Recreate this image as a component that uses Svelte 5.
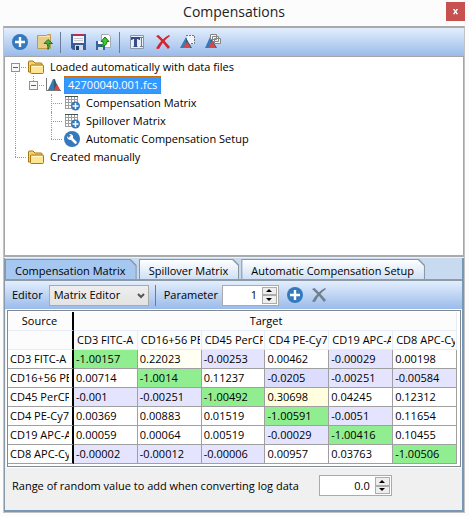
<!-- Compensations.svelte -->
<script lang="ts">
  interface Row {
    source: string;
    values: string[];
  }

  const targets: string[] = ['CD3 FITC-A', 'CD16+56 PE-A', 'CD45 PerCP-A', 'CD4 PE-Cy7-A', 'CD19 APC-A', 'CD8 APC-Cy7-A'];
  const tabs: string[] = ['Compensation Matrix', 'Spillover Matrix', 'Automatic Compensation Setup'];

  const rows: Row[] = [
    { source: 'CD3 FITC-A', values: ['-1.00157', '0.22023', '-0.00253', '0.00462', '-0.00029', '0.00198'] },
    { source: 'CD16+56 PE-A', values: ['0.00714', '-1.0014', '0.11237', '-0.0205', '-0.00251', '-0.00584'] },
    { source: 'CD45 PerCP-A', values: ['-0.001', '-0.00251', '-1.00492', '0.30698', '0.04245', '0.12312'] },
    { source: 'CD4 PE-Cy7-A', values: ['0.00369', '0.00883', '0.01519', '-1.00591', '-0.0051', '0.11654'] },
    { source: 'CD19 APC-A', values: ['0.00059', '0.00064', '0.00519', '-0.00029', '-1.00416', '0.10455'] },
    { source: 'CD8 APC-Cy7-A', values: ['-0.00002', '-0.00012', '-0.00006', '0.00957', '0.03763', '-1.00506'] }
  ];

  let activeTab = 0;
  let parameter = '1';
  let range = '0.0';

  // background class of a cell, by its value
  const shade = (text: string): string => {
    const v = parseFloat(text);
    if (v <= -1) return 'diagonal';
    if (v < -0.02) return 'low';
    if (v < 0) return 'negative';
    if (v > 0.3) return 'high';
    if (v > 0.2) return 'warm';
    return '';
  };

  const stepParameter = (by: number): void => {
    parameter = String(Math.max(1, Number(parameter) + by));
  };

  const stepRange = (by: number): void => {
    range = Math.max(0, Number(range) + by / 10).toFixed(1);
  };
</script>

{#snippet plusIcon()}
  <svg class="icon" viewBox="0 0 16 16">
    <circle cx="8" cy="8" r="8" fill="#3579bd" />
    <path d="M8 3v10M3 8h10" stroke="#fff" stroke-width="2.4" />
  </svg>
{/snippet}

{#snippet crossIcon(color)}
  <svg class="icon" viewBox="0 0 16 16">
    <path d="M1 2 3.500 1Q9 6 15 13L13 15Q8 8 1 2Z" fill={color} />
    <path d="M14 1 15 2Q8 7 4 15L1 14.500Q6 5 14 1Z" fill={color} />
  </svg>
{/snippet}

{#snippet folderIcon()}
  <svg class="icon" viewBox="0 0 16 16">
    <path d="M.500 13V3q0-1 1-1H5l2 2h6q1 0 1 1v8z" fill="#f4d16a" stroke="#a87812" />
    <path d="M2.500 7q0-1 1-1h11q1 0 1 1v6.500q0 1-1 1h-11q-1 0-1-1z" fill="#ffe591" stroke="#a87812" />
    <path d="M4 7.500h10" stroke="#fff7cd" />
  </svg>
{/snippet}

{#snippet gridIcon()}
  <svg class="icon" viewBox="0 0 16 16">
    <path d="M1 1h13v13H1z" fill="#fff" />
    <path d="M1.500 1v13M4.500 1v13M7.500 1v13M10.500 1v13M13.500 1v13M1 4.500h13M1 7.500h13M1 10.500h13M1 13.500h13" stroke="#9d9d9d" />
    <path d="M1 1h13v1H1z" fill="#3f5550" />
    <circle cx="11.500" cy="11" r="4.500" fill="#3579bd" />
    <path d="M11.500 8v6M8.500 11h6" stroke="#fff" stroke-width="1.500" />
  </svg>
{/snippet}

<div class="window">
  <header>
    <h1>Compensations</h1>
    <button class="close" aria-label="Close">
      <svg viewBox="0 0 8 8"><path d="M1 1h2l1 2 1-2h2L5 4l2 3H5L4 5 3 7H1l2-3z" fill="#fff" /></svg>
    </button>
  </header>

  <div class="frame">
    <div class="toolbar">
      <button aria-label="Add">{@render plusIcon()}</button>
      <button aria-label="Open">
        <svg class="icon" viewBox="0 0 16 16">
          <path d="M.500 1.500h9l1-1h3v14H.500z" fill="#e8cd88" stroke="#bd9b4d" />
          <path d="M2 2h11v1H2z" fill="#f7e5ac" />
          <path d="M7 9.500 11 5.500l4.500 4H12q1 4-1 6 0-3-1-6z" fill="#4dae42" stroke="#24752a" />
        </svg>
      </button>
      <span class="separator"></span>
      <button aria-label="Save">
        <svg class="icon" viewBox="0 0 16 16">
          <path d="M0 0h15v16H2l-2-2z" fill="#385d9a" />
          <path d="M2 0h11v9H2z" fill="#f6f6f8" />
          <path d="M2 0h11v2H2z" fill="#b92d52" />
          <path d="M3 4.500h9M3 6.500h9" stroke="#c8c8d0" />
          <path d="M4 11h8v5H4z" fill="#d5dbe2" />
          <path d="M5 12h3v4H5z" fill="#273c59" />
        </svg>
      </button>
      <button aria-label="Export">
        <svg class="icon" viewBox="0 0 16 16">
          <path d="M5.500.500h7l2 2v11h-9z" fill="#fff" stroke="#a3a9b2" />
          <path d="M0 7h9v9H0z" fill="#3b629e" />
          <path d="M2 7h5v3H2z" fill="#fff" />
          <path d="M2 13h5v3H2z" fill="#d4dae3" />
          <path d="M4 12.500q4-1 3-5H5l4-4.500 4 4.500h-2q0 5-7 5z" fill="#43c629" stroke="#187621" />
        </svg>
      </button>
      <span class="separator"></span>
      <button aria-label="Rename">
        <svg class="icon" viewBox="0 0 16 16">
          <path d="M.500 1.500h13v13H.500z" fill="#e9eff9" stroke="#8b98a8" />
          <path d="M1 3h9v3H9L8 5H7v7l1 1H3l1-1V5H3L2 6H1z" fill="#354e88" />
          <path d="M10 3.500h3M11.500 4v8M10 12.500h3" stroke="#707b8c" />
        </svg>
      </button>
      <button aria-label="Delete">{@render crossIcon('#d3252d')}</button>
      <button aria-label="Select plot">
        <svg class="icon" viewBox="0 0 16 16">
          <path d="M7 1h7v9H7z" fill="#eef4fd" />
          <path d="M6 1.500h8.500v8H11" fill="none" stroke="#777" stroke-dasharray="2 1" />
          <path d="M0 14 6 3l4 11z" fill="#347bb8" />
          <path d="M6 14V4l6 10z" fill="#355b70" />
          <path d="m3 14 4-6 4 6z" fill="#dd4545" />
        </svg>
      </button>
      <button aria-label="Copy plots">
        <svg class="icon" viewBox="0 0 16 16">
          <path d="M0 14 5 3l6 11z" fill="#347bb8" />
          <path d="M6 14V4l6 10z" fill="#355b70" />
          <path d="M5.500.500h6v5h-6zM7.500 2.500h6v5h-6zM9.500 4.500h6v5h-6z" fill="#f5f5f5" stroke="#858585" />
          <path d="m3 14 4-7 4 7z" fill="#dd4545" />
        </svg>
      </button>
    </div>

    <ul class="tree">
      <li>
        <div class="node"><button class="expander" aria-label="Collapse"></button>{@render folderIcon()}<span class="label">Loaded automatically with data files</span></div>
        <ul>
          <li>
            <div class="node">
              <button class="expander" aria-label="Collapse"></button>
              <svg class="icon" viewBox="0 0 16 16">
                <path d="M.500 1v12.500H15" fill="none" stroke="#777" />
                <path d="m2 13 5-11h2l3 11z" fill="#347bb8" />
                <path d="M8 13V2l6 11z" fill="#315b70" />
                <path d="m8 13 3-6 3 6z" fill="#dd4545" />
              </svg>
              <span class="label selected">42700040.001.fcs</span>
            </div>
            <ul>
              <li><div class="node">{@render gridIcon()}<span class="label">Compensation Matrix</span></div></li>
              <li><div class="node">{@render gridIcon()}<span class="label">Spillover Matrix</span></div></li>
              <li>
                <div class="node">
                  <svg class="icon" viewBox="0 0 16 16">
                    <circle cx="8" cy="8" r="8" fill="#3579bd" />
                    <path d="m6.500 6.500 5 5" stroke="#fff" stroke-width="2.600" stroke-linecap="round" />
                    <path d="M3 5q0 4 4 4l2-2q1-4-4-4l2 2-1 2H5z" fill="#fff" />
                  </svg>
                  <span class="label">Automatic Compensation Setup</span>
                </div>
              </li>
            </ul>
          </li>
        </ul>
      </li>
      <li><div class="node">{@render folderIcon()}<span class="label">Created manually</span></div></li>
    </ul>

    <div class="splitter"></div>

    <section class="editor">
      <div class="tabs" role="tablist">
        {#each tabs as tab, i}
          <button class="tab" class:active={i === activeTab} role="tab" aria-selected={i === activeTab} on:click={() => (activeTab = i)}>
            <span>{tab}</span>
          </button>
        {/each}
      </div>

      <div class="toolbar options">
        <label for="editor">Editor</label>
        <div class="select">
          <select id="editor"><option>Matrix Editor</option></select>
          <svg viewBox="0 0 8 6"><path d="m1 1 3 3 3-3" fill="none" stroke="#555" stroke-width="2" /></svg>
        </div>
        <span class="separator"></span>
        <label for="parameter">Parameter</label>
        <div class="spin">
          <input id="parameter" type="text" bind:value={parameter} />
          <div class="arrows">
            <button class="up" aria-label="Increase" on:click={() => stepParameter(1)}></button>
            <button class="down" aria-label="Decrease" on:click={() => stepParameter(-1)}></button>
          </div>
        </div>
        <button aria-label="Add parameter">{@render plusIcon()}</button>
        <button aria-label="Remove parameter">{@render crossIcon('#737f8e')}</button>
      </div>

      <div class="matrix">
        <table>
          <thead>
            <tr><th class="source center">Source</th><th class="center" colspan="6">Target</th></tr>
            <tr>
              <th class="source"></th>
              {#each targets as target}
                <th class="target"><div>{target}</div></th>
              {/each}
            </tr>
          </thead>
          <tbody>
            {#each rows as row}
              <tr>
                <th class="source" scope="row"><div>{row.source}</div></th>
                {#each row.values as value}
                  <td class={shade(value)}>{value}</td>
                {/each}
              </tr>
            {/each}
          </tbody>
        </table>
      </div>

      <div class="range">
        <label for="range">Range of random value to add when converting log data</label>
        <div class="spin">
          <input id="range" type="text" bind:value={range} />
          <div class="arrows">
            <button class="up" aria-label="Increase" on:click={() => stepRange(1)}></button>
            <button class="down" aria-label="Decrease" on:click={() => stepRange(-1)}></button>
          </div>
        </div>
      </div>
    </section>
  </div>
</div>

<style>
:global(body) {
  background: #fcfcfc;
}

.window {
  box-sizing: border-box;
  padding: 0 4px 5px 3px;
  font: 11px/18px "Open Sans", "Noto Sans", sans-serif;
  color: #000;
}

button,
input,
select {
  font: inherit;
  color: inherit;
  box-sizing: border-box;
}

button {
  padding: 0;
  border: 0;
  background: none;
}

ul {
  margin: 0;
  padding: 0;
  list-style: none;
}

header {
  position: relative;
  height: 26px;
}

h1 {
  margin: 0;
  font-size: 14px;
  font-weight: 400;
  line-height: 24px;
  text-align: center;
  color: #222;
}

.close {
  position: absolute;
  top: 2px;
  right: 0;
  width: 19px;
  height: 19px;
  background: #c75050;
}

.close svg {
  display: block;
  width: 7px;
  height: 7px;
  margin: auto;
}

.frame {
  border: 1px solid #c3c3c3;
  border-top: 2px solid #aaa;
}

.icon {
  display: block;
  flex: none;
  width: 16px;
  height: 16px;
}

.toolbar {
  display: flex;
  align-items: center;
  gap: 9px;
  height: 28px;
  padding-left: 8px;
  box-sizing: border-box;
  background: linear-gradient(#e3eefd, #9abbea);
}

.separator {
  width: 1px;
  height: 21px;
  margin: 0 1px 0 -2px;
  background: #6a7c96;
}

.tree {
  height: 199px;
  padding: 1px 0 0 1px;
  box-sizing: border-box;
  border: 1px solid #a5a5a5;
  border-bottom: 0;
  background: #fff;
}

.tree ul {
  padding-left: 18px;
}

.tree li {
  position: relative;
}

/* connector lines */
.tree li::before {
  content: "";
  position: absolute;
  top: 0;
  bottom: 0;
  left: 9px;
  border-left: 1px dotted #999;
}

.tree > li:first-child::before {
  top: 9px;
}

.tree li:last-child::before {
  bottom: auto;
  height: 9px;
}

.node {
  position: relative;
  display: flex;
  align-items: center;
  gap: 2px;
  height: 18px;
  padding-left: 22px;
}

.node::before {
  content: "";
  position: absolute;
  top: 9px;
  left: 9px;
  width: 11px;
  border-top: 1px dotted #999;
}

.expander {
  position: absolute;
  top: 5px;
  left: 5px;
  width: 9px;
  height: 9px;
  border: 1px solid #919191;
  background: linear-gradient(#3f5fa8, #3f5fa8) center / 5px 1px no-repeat #f8f8f8;
}

.label {
  padding: 0 4px;
}

.selected {
  background: #3399ff;
  color: #fff;
  outline: 1px dotted #cc6600;
  outline-offset: -1px;
}

.splitter {
  height: 2px;
  border-bottom: 1px solid #f0f0f0;
  background: #aaa;
}

.editor {
  border: 1px solid #8a9aa8;
  border-top: 0;
  border-right: 2px solid #7797b7;
  border-bottom: 2px solid #7797b7;
  background: #f0f0f0;
}

.tabs {
  display: flex;
  gap: 2px;
  height: 23px;
  padding-top: 1px;
  box-sizing: border-box;
  border-bottom: 2px solid #8e9ba5;
  background: #c7daf0;
}

.tab {
  padding: 1px 1px 0 0;
  white-space: nowrap;
  background: #8796a3;
  clip-path: polygon(0 0, calc(100% - 6px) 0, 100% 6px, 100% 100%, 0 100%);
}

.tab span {
  display: block;
  height: 19px;
  margin-left: 1px;
  padding: 0 10px 0 9px;
  line-height: 21px;
  background: linear-gradient(#fff, #cfe0f5);
  clip-path: polygon(0 0, calc(100% - 6px) 0, 100% 6px, 100% 100%, 0 100%);
}

.tab.active span {
  background: #a6c8f0;
}

.options {
  gap: 8px;
  padding-left: 7px;
}

.options .separator {
  margin-right: 0;
}

.options .spin {
  width: 57px;
  margin-left: -4px;
}

.select {
  position: relative;
  margin-left: -2px;
}

.select select {
  display: block;
  width: 100px;
  height: 21px;
  padding: 0 4px;
  border: 1px solid #aaa;
  border-radius: 0;
  background: linear-gradient(#eee, #e3e3e3);
  appearance: none;
}

.select svg {
  position: absolute;
  top: 8px;
  right: 4px;
  width: 8px;
  height: 6px;
  pointer-events: none;
}

.spin {
  display: flex;
  box-sizing: border-box;
  height: 21px;
  padding: 1px;
  border: 1px solid #aaa;
  background: #fff;
}

.spin input {
  flex: 1;
  min-width: 0;
  padding: 0 5px 0 2px;
  border: 0;
  background: none;
  text-align: right;
}

.arrows {
  display: flex;
  flex-direction: column;
  width: 15px;
}

.arrows button {
  display: flex;
  align-items: center;
  justify-content: center;
  flex: 1;
  border: 1px solid #acacac;
  background: #eee;
}

.arrows button::before {
  content: "";
  border: 3px solid transparent;
}

.arrows .up::before {
  border-top: 0;
  border-bottom-color: #000;
}

.arrows .down::before {
  border-bottom: 0;
  border-top-color: #000;
}

.matrix {
  margin: 1px 1px 0 2px;
  padding: 1px 3px 2px 0;
  border: 1px solid #828790;
  background: #fff;
  box-shadow: 0 0 0 1px #fff;
}

table {
  width: 100%;
  border-spacing: 0;
  table-layout: fixed;
}

th,
td {
  height: 19px;
  padding: 0 0 0 2px;
  box-sizing: border-box;
  border-right: 1px solid #a0a0a0;
  border-bottom: 1px solid #a0a0a0;
  font-weight: 400;
  line-height: 18px;
  text-align: left;
}

th div {
  overflow: hidden;
  white-space: nowrap;
}

thead th {
  border-color: #e4edf8;
  background: #fcfcfc;
}

.source {
  width: 66px;
  padding: 0 3px 0 2px;
  border-right: 2px solid #000;
}

thead .source {
  border-right-color: #000;
}

.center {
  text-align: center;
}

.target {
  padding: 0 1px 0 3px;
}

.diagonal {
  background: #90ee90;
}

.negative {
  background: #e4e4ff;
}

.low {
  background: #dcdcfc;
}

.warm {
  background: #fffff4;
}

.high {
  background: #ffffe0;
}

.range {
  display: flex;
  align-items: center;
  gap: 20px;
  height: 43px;
  padding: 0 7px 6px;
  box-sizing: border-box;
}

.range .spin {
  width: 73px;
}
</style>
